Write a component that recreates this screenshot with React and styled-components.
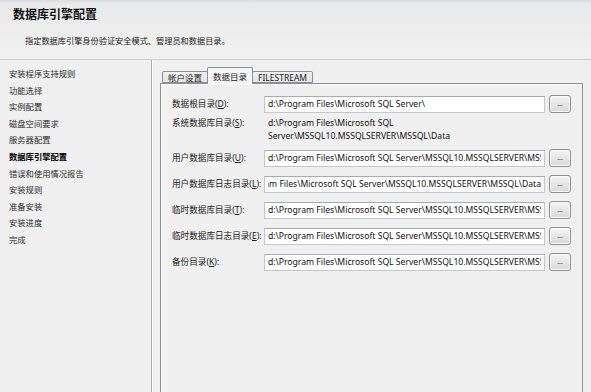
import React from "react";
import styled, { createGlobalStyle } from "styled-components";

const GlobalStyle = createGlobalStyle`
  html, body {
    margin: 0;
    padding: 0;
    background: #f0f0f0;
  }
  body {
    font-family: "Noto Sans", "Noto Sans CJK SC", sans-serif;
    color: #1e1e1e;
    overflow: hidden;
  }
`;

const Window = styled.div`
  width: 591px;
  height: 392px;
  display: flex;
  flex-direction: column;
  background: #f0f0f0;
  overflow: hidden;
`;

const Header = styled.div`
  height: 60px;
  box-sizing: border-box;
  padding: 7px 0 0 13px;
  background: linear-gradient(#d9dde2 0px, #e9e9e9 4px, #f2f2f2 60px);
  border-bottom: 1px solid #cfcfcf;
  .title {
    font-size: 12px;
    line-height: 16px;
    font-weight: 700;
    color: #111;
    margin: 0;
  }
  .subtitle {
    font-size: 8.2px;
    line-height: 12px;
    margin: 12px 0 0 12px;
    color: #222;
  }
`;

const Body = styled.div`
  flex: 1;
  display: flex;
  min-height: 0;
`;

const Nav = styled.div`
  width: 152px;
  box-sizing: border-box;
  padding: 6px 0 0 9px;
  border-right: 1px solid #a9a9a9;
  box-shadow: 1px 0 0 #ffffff;
  display: flex;
  flex-direction: column;
`;

const NavItem = styled.div`
  font-size: 8.3px;
  line-height: 16.6px;
  font-weight: ${(p) => (p.$active ? 700 : 400)};
  color: ${(p) => (p.$active ? "#000" : "#2b2b2b")};
  white-space: nowrap;
`;

const Content = styled.div`
  flex: 1;
  display: flex;
  flex-direction: column;
  padding: 7px 8px 0 8px;
  min-width: 0;
`;

const TabStrip = styled.div`
  display: flex;
  align-items: flex-end;
  padding-left: 3px;
  height: 16px;
  position: relative;
  z-index: 1;
`;

const Tab = styled.div`
  box-sizing: border-box;
  height: ${(p) => (p.$active ? 17 : 12)}px;
  margin-bottom: ${(p) => (p.$active ? -1 : 0)}px;
  padding: 0 5px;
  display: flex;
  align-items: center;
  justify-content: center;
  font-size: 8.5px;
  color: #222;
  border: 1px solid #8c8e94;
  border-bottom: ${(p) => (p.$active ? "none" : "1px solid #8c8e94")};
  margin-left: -1px;
  background: ${(p) =>
    p.$active ? "#f6f6f6" : "linear-gradient(#f2f2f2, #e4e4e4)"};
  border-radius: 2px 2px 0 0;
`;

const Panel = styled.div`
  flex: 1;
  border: 1px solid #8c8e94;
  border-bottom: none;
  background: #f0f0f0;
  box-shadow: inset 1px 1px 0 #fafafa;
  padding: 11px 10px 0 11px;
  display: flex;
  flex-direction: column;
`;

const Row = styled.div`
  display: grid;
  grid-template-columns: 88px 281px 22px;
  column-gap: 4px;
  align-items: ${(p) => (p.$static ? "start" : "center")};
  margin-top: ${(p) => p.$top}px;
  min-height: 17px;
`;

const Label = styled.div`
  font-size: 8.6px;
  line-height: 13px;
  color: #222;
  white-space: nowrap;
  u {
    text-decoration: underline;
    text-underline-offset: 1px;
  }
`;

const PathBox = styled.div`
  height: 17px;
  box-sizing: border-box;
  background: #fff;
  border: 1px solid #c4c7cc;
  border-top-color: #a8abb2;
  display: flex;
  align-items: center;
  padding: 0 3px;
  font-size: 8.6px;
  color: #111;
`;

const PathValue = styled.span`
  flex: 1;
  min-width: 0;
  display: block;
  overflow: hidden;
  white-space: nowrap;
  direction: ${(p) => (p.$end ? "rtl" : "ltr")};
`;

const PathText = styled.div`
  font-size: 8.6px;
  line-height: 13px;
  padding-left: 4px;
  color: #111;
`;

const Browse = styled.button`
  width: 22px;
  height: 18px;
  box-sizing: border-box;
  border: 1px solid #8f8f8f;
  border-radius: 3px;
  background: linear-gradient(#f4f4f4 0%, #e6e6e6 50%, #d8d8d8 100%);
  box-shadow: inset 0 0 0 1px #fbfbfb;
  font-size: 7px;
  line-height: 1;
  color: #333;
  padding: 0 0 2px;
  font-family: "Noto Sans", sans-serif;
`;

const navItems = [
  "安装程序支持规则",
  "功能选择",
  "实例配置",
  "磁盘空间要求",
  "服务器配置",
  "数据库引擎配置",
  "错误和使用情况报告",
  "安装规则",
  "准备安装",
  "安装进度",
  "完成",
];

const full = "d:\\Program Files\\Microsoft SQL Server\\MSSQL10.MSSQLSERVER\\MSSQL\\Data";

const rows = [
  { label: "数据根目录", key: "D", value: "d:\\Program Files\\Microsoft SQL Server\\", top: 0 },
  { label: "系统数据库目录", key: "S", value: full, top: 4, static: true },
  { label: "用户数据库目录", key: "U", value: full, top: 6 },
  { label: "用户数据库日志目录", key: "L", value: full, top: 8, end: true },
  { label: "临时数据库目录", key: "T", value: full, top: 8 },
  { label: "临时数据库日志目录", key: "E", value: full, top: 8 },
  { label: "备份目录", key: "K", value: full, top: 8 },
];

export default function App() {
  return (
    <Window>
      <GlobalStyle />
      <Header>
        <h1 className="title">数据库引擎配置</h1>
        <p className="subtitle">指定数据库引擎身份验证安全模式、管理员和数据目录。</p>
      </Header>
      <Body>
        <Nav>
          {navItems.map((item) => (
            <NavItem key={item} $active={item === "数据库引擎配置"}>
              {item}
            </NavItem>
          ))}
        </Nav>
        <Content>
          <TabStrip>
            <Tab>帐户设置</Tab>
            <Tab $active>数据目录</Tab>
            <Tab>FILESTREAM</Tab>
          </TabStrip>
          <Panel>
            {rows.map((r) => (
              <Row key={r.key} $top={r.top} $static={r.static}>
                <Label>
                  {r.label}(<u>{r.key}</u>):
                </Label>
                {r.static ? (
                  <PathText>{r.value}</PathText>
                ) : (
                  <PathBox>
                    <PathValue $end={r.end}>{r.value}</PathValue>
                  </PathBox>
                )}
                {!r.static && <Browse>...</Browse>}
              </Row>
            ))}
          </Panel>
        </Content>
      </Body>
    </Window>
  );
}
